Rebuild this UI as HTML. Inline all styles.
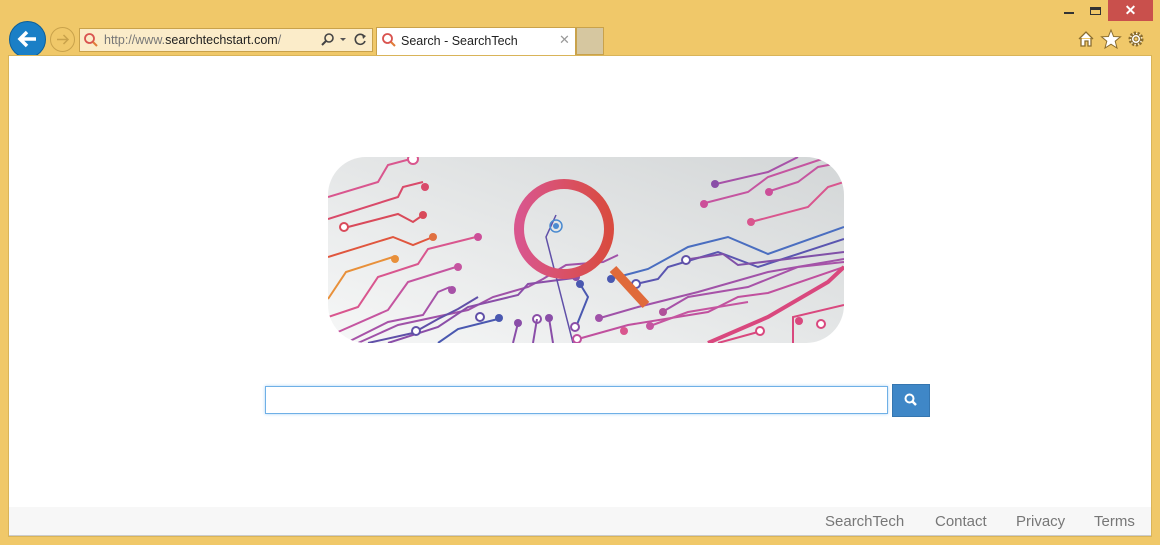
<!DOCTYPE html>
<html><head><meta charset="utf-8"><style>
*{margin:0;padding:0;box-sizing:border-box}
body{width:1160px;height:545px;background:#f0c869;position:relative;overflow:hidden;font-family:"Liberation Sans",sans-serif}
.abs{position:absolute}
#content{left:8px;top:55px;width:1144px;height:482px;background:#fff;border:1px solid #d9b459}
#footer{left:9px;top:507px;width:1142px;height:29px;background:#f7f7f7;border-bottom:1px solid #ccc}
#footer span{position:absolute;top:6px;font-size:15px;color:#777}
</style></head><body>
<!-- title bar controls -->
<div class="abs" style="left:1064px;top:12px;width:10px;height:2px;background:#333"></div>
<div class="abs" style="left:1090px;top:7px;width:11px;height:8px;border:1.5px solid #333;border-top-width:3px"></div>
<div class="abs" style="left:1108px;top:0;width:45px;height:21px;background:#c9504c;color:#fff;font-size:14px;text-align:center;line-height:21px;font-weight:bold">✕</div>
<svg class="abs" style="left:1076px;top:28px" width="70" height="22">
<path d="M3 11 L10 4 L17 11 M5 10 V18 H9 V13 H12 V18 H15 V10" fill="#fff" stroke="#8a6d2e" stroke-width="1.3"/>
<path d="M35 2 L37.6 8.5 L44.5 8.8 L39.2 13.2 L41 20 L35 16.2 L29 20 L30.8 13.2 L25.5 8.8 L32.4 8.5Z" fill="#fff" stroke="#8a6d2e" stroke-width="1"/>
<circle cx="60" cy="11" r="6" fill="#fff" stroke="#8a6d2e" stroke-width="3" stroke-dasharray="2.2 1.5"/>
<circle cx="60" cy="11" r="4.5" fill="#fff" stroke="#8a6d2e" stroke-width="1"/>
<circle cx="60" cy="11" r="2" fill="#f0c869" stroke="#8a6d2e" stroke-width="1"/>
</svg>
<!-- back/forward -->
<div class="abs" style="left:9px;top:21px;width:37px;height:37px;border-radius:50%;background:#1a7fc6;border:1px solid #0d5f99"></div>
<svg class="abs" style="left:9px;top:21px" width="37" height="37"><path d="M27 18 H11 M18 11 L11 18 L18 25" stroke="#fff" stroke-width="3.5" fill="none"/></svg>
<div class="abs" style="left:50px;top:27px;width:25px;height:25px;border-radius:50%;border:1px solid #c9a24b"></div>
<svg class="abs" style="left:50px;top:27px" width="25" height="25"><path d="M7 12.5 H18 M13.5 8 L18 12.5 L13.5 17" stroke="#c9a24b" stroke-width="1.5" fill="none"/></svg>
<!-- address bar -->
<div class="abs" style="left:79px;top:28px;width:294px;height:24px;background:#fbecc9;border:1px solid #c9a24b"></div>
<svg class="abs" style="left:83px;top:32px" width="16" height="16"><circle cx="6.5" cy="6.5" r="4.5" stroke="#d9534f" stroke-width="1.8" fill="none"/><path d="M10 10 L14 14" stroke="#e07b39" stroke-width="2"/></svg>
<div class="abs" style="left:104px;top:33px;font-size:12.5px;color:#777">http://www.<span style="color:#222">searchtechstart.com</span>/</div>
<svg class="abs" style="left:320px;top:31px" width="50" height="18"><circle cx="9" cy="7" r="4" stroke="#444" stroke-width="1.6" fill="none"/><path d="M6 10 L2 14" stroke="#444" stroke-width="2"/><path d="M20 7 H26 L23 10Z" fill="#555"/><path d="M44 5 A5 5 0 1 0 45 10" stroke="#444" stroke-width="1.6" fill="none"/><path d="M42 3 L46 5 L43 8" fill="#444"/></svg>
<!-- tab -->
<div class="abs" style="left:376px;top:27px;width:200px;height:28px;background:#fff;border:1px solid #c9a24b;border-bottom:none"></div>
<svg class="abs" style="left:381px;top:32px" width="16" height="16"><circle cx="6.5" cy="6.5" r="4.5" stroke="#d9534f" stroke-width="1.8" fill="none"/><path d="M10 10 L14 14" stroke="#e07b39" stroke-width="2"/></svg>
<div class="abs" style="left:401px;top:34px;font-size:12.5px;color:#222">Search - SearchTech</div>
<div class="abs" style="left:559px;top:32px;font-size:13px;color:#999">✕</div>
<div class="abs" style="left:576px;top:27px;width:28px;height:28px;background:#d6c7a0;border:1px solid #c9a24b"></div>

<div id="content" class="abs"></div>
<!-- banner -->
<svg class="abs" style="left:328px;top:157px" width="516" height="186" viewBox="0 0 516 186">
<defs><linearGradient id="bg" x1="0" y1="1" x2="1" y2="0"><stop offset="0" stop-color="#f6f7f7"/><stop offset="1" stop-color="#d3d6d7"/></linearGradient>
<linearGradient id="mg" x1="0" x2="1"><stop offset="0" stop-color="#d9568e"/><stop offset="1" stop-color="#d94b40"/></linearGradient>
<clipPath id="c"><rect width="516" height="186" rx="38"/></clipPath></defs>
<rect width="516" height="186" rx="38" fill="url(#bg)"/>
<g clip-path="url(#c)" fill="none" stroke-width="2">
<path d="M0 40 L50 25 L60 8 L90 0" stroke="#d9568e"/>
<path d="M0 62 L70 40 L75 30 L95 25" stroke="#d94a6a"/><circle cx="97" cy="30" r="4" fill="#d94a6a"/>
<path d="M20 70 L70 57 L85 65 L95 58" stroke="#d94a5a"/><circle cx="16" cy="70" r="4" stroke="#d94a5a" fill="#fff"/><circle cx="95" cy="58" r="4" fill="#d94a5a"/>
<path d="M0 100 L65 80 L85 88 L105 80" stroke="#e0563e"/><circle cx="105" cy="80" r="4" fill="#e07040"/>
<path d="M0 142 L18 115 L65 100" stroke="#e8903a"/><circle cx="67" cy="102" r="4" fill="#e8903a"/>
<path d="M0 160 L30 150 L50 120 L90 107 L100 92 L148 80" stroke="#d9568e"/><circle cx="150" cy="80" r="4" fill="#cc4f99"/>
<path d="M10 175 L60 153 L80 125 L128 110" stroke="#c555a0"/><circle cx="130" cy="110" r="4" fill="#c555a0"/>
<path d="M20 185 L60 165 L95 158 L110 135 L122 130" stroke="#a752a8"/><circle cx="124" cy="133" r="4" fill="#a752a8"/>
<path d="M30 186 L70 168 L140 153 L165 140 L200 130 L215 122 L238 108 L275 105 L290 98" stroke="#a052a8"/>
<path d="M60 186 L110 170 L140 150 L190 138 L200 127 L246 121" stroke="#8a4ea8"/><circle cx="248" cy="120" r="4" fill="#8a4ea8"/>
<path d="M40 186 L85 176 L110 162 L130 152 L150 140" stroke="#6050a8"/><circle cx="88" cy="174" r="4" stroke="#6050a8" fill="#fff"/><circle cx="152" cy="160" r="4" stroke="#6050a8" fill="#fff"/>
<path d="M110 186 L130 172 L170 162" stroke="#4a58b0"/><circle cx="171" cy="161" r="4" fill="#4a58b0"/>
<circle cx="190" cy="166" r="4" fill="#8a4ea8"/><path d="M190 166 L185 186" stroke="#8a4ea8"/>
<circle cx="209" cy="162" r="4" stroke="#8a4ea8" fill="#fff"/><path d="M209 162 L205 186" stroke="#8a4ea8"/>
<circle cx="221" cy="161" r="4" fill="#8a4ea8"/><path d="M221 161 L225 186" stroke="#8a4ea8"/>
<path d="M228 58 L218 80 L245 186" stroke="#6050a8" stroke-width="1.5"/>
<path d="M248 170 L260 140 L252 127" stroke="#4a58b0"/><circle cx="247" cy="170" r="4" stroke="#8a4ea8" fill="#fff"/><circle cx="252" cy="127" r="4" fill="#4a58b0"/>
<path d="M282 122 L320 112 L360 90 L400 80 L440 97 L516 70" stroke="#4a6ec0"/><circle cx="283" cy="122" r="4" fill="#4a58b0"/>
<path d="M308 127 L330 122 L340 110 L390 95 L430 110 L516 82" stroke="#5a55b0"/><circle cx="308" cy="127" r="4" stroke="#5a55b0" fill="#fff"/>
<circle cx="358" cy="103" r="4" stroke="#6050a8" fill="#fff"/><path d="M362 102 L395 97 L410 108 L516 95" stroke="#8050a8"/>
<path d="M272 161 L310 150 L370 135 L440 115 L516 102" stroke="#a052a8"/><circle cx="271" cy="161" r="4" fill="#a052a8"/>
<path d="M336 154 L360 140 L420 130 L470 110 L516 105" stroke="#a752a8"/><circle cx="335" cy="155" r="4" fill="#b0509a"/>
<path d="M250 182 L300 168 L380 155 L410 140 L440 136 L516 110" stroke="#c0509e"/><circle cx="249" cy="182" r="4" stroke="#c0509e" fill="#fff"/>
<circle cx="322" cy="169" r="4" fill="#c555a0"/><path d="M322 169 L360 155 L420 145" stroke="#c555a0"/>
<circle cx="296" cy="174" r="4" fill="#d9568e"/>
<path d="M380 186 L440 160 L500 125 L516 110" stroke="#d9487e" stroke-width="4"/>
<path d="M390 186 L430 175" stroke="#d9487e"/><circle cx="432" cy="174" r="4" stroke="#d9487e" fill="#fff"/>
<path d="M465 186 L465 160 L516 148" stroke="#d9487e"/><circle cx="471" cy="164" r="4" fill="#d9487e"/><circle cx="493" cy="167" r="4" stroke="#d9487e" fill="#fff"/>
<path d="M388 27 L440 15 L470 0" stroke="#a752a8"/><circle cx="387" cy="27" r="4" fill="#8a4ea8"/>
<path d="M377 46 L420 35 L440 20 L500 0" stroke="#c555a0"/><circle cx="376" cy="47" r="4" fill="#cc4f99"/>
<path d="M442 34 L470 25 L490 10 L516 5" stroke="#c555a0"/><circle cx="441" cy="35" r="4" fill="#cc4f99"/>
<path d="M423 65 L480 50 L500 30 L516 25" stroke="#d9568e"/><circle cx="423" cy="65" r="4" fill="#d9568e"/>
<circle cx="85" cy="2" r="5" stroke="#d9568e" fill="#fff"/>
</g>
<g clip-path="url(#c)">
<path d="M285 112 L318 148" stroke="#e06a3a" stroke-width="9"/>
<circle cx="236" cy="72" r="45" fill="none" stroke="url(#mg)" stroke-width="10"/>
<circle cx="228" cy="69" r="6" fill="none" stroke="#4a8ad0" stroke-width="1.5"/><circle cx="228" cy="69" r="3" fill="#4a8ad0"/>
</g>
</svg>
<!-- search -->
<div class="abs" style="left:265px;top:386px;width:623px;height:28px;border:1px solid #6fb0e6;box-shadow:0 0 3px #a9d2f5;background:#fff"></div>
<div class="abs" style="left:892px;top:384px;width:38px;height:33px;background:#3f87c7;border:1px solid #3576b0"></div>
<svg class="abs" style="left:903px;top:392px" width="16" height="16"><circle cx="6.5" cy="6.5" r="4" stroke="#fff" stroke-width="2" fill="none"/><path d="M9.5 9.5 L13 13" stroke="#fff" stroke-width="2.5"/></svg>
<div id="footer" class="abs">
<span style="left:816px">SearchTech</span>
<span style="left:926px">Contact</span>
<span style="left:1007px">Privacy</span>
<span style="left:1085px">Terms</span>
</div>
</body></html>
